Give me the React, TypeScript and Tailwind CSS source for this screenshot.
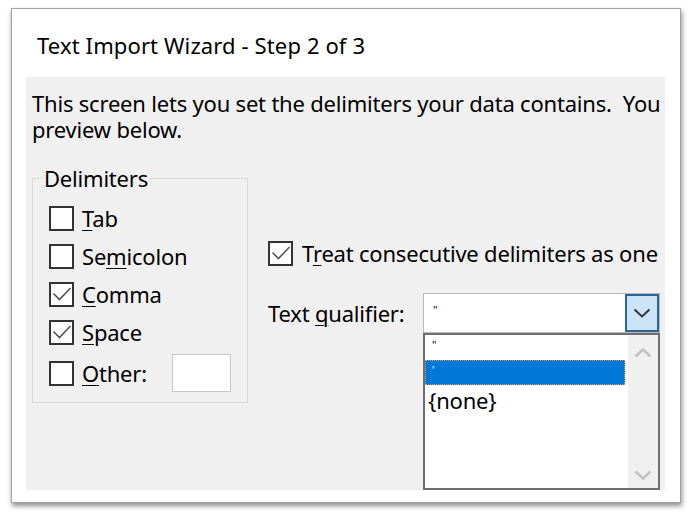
import React from 'react';

function CheckBox({ checked }: { checked?: boolean }) {
  return (
    <span className="flex h-[25px] w-[25px] shrink-0 items-center justify-center border-2 border-[#333333] bg-white">
      {checked && (
        <svg viewBox="0 0 21 21" className="h-[21px] w-[21px]">
          <path d="M2.5 9.5 L8.5 15.5 L19.5 4" fill="none" stroke="#555555" strokeWidth="1.6" />
        </svg>
      )}
    </span>
  );
}

function Chevron({ up, color, width }: { up?: boolean; color: string; width: number }) {
  return (
    <svg viewBox="0 0 18 10" className="h-[10px] w-[18px]">
      <path
        d={up ? 'M1.5 8.5 L9 1.5 L16.5 8.5' : 'M1.5 1.5 L9 8.5 L16.5 1.5'}
        fill="none"
        stroke={color}
        strokeWidth={width}
      />
    </svg>
  );
}

function Option({ checked, label }: { checked?: boolean; label: React.ReactNode }) {
  return (
    <div className="flex h-[38px] items-center gap-[8px]">
      <CheckBox checked={checked} />
      <span className="whitespace-nowrap">{label}</span>
    </div>
  );
}

const u = 'underline decoration-1 underline-offset-[3px]';

export default function App() {
  return (
    <div className="h-[519px] w-[691px] overflow-hidden bg-white pl-[11px] pt-[8px] font-['Noto_Sans',sans-serif] text-[22px] text-black">
      <div className="h-[495px] w-[670px] border border-[#a3a3a3] bg-white shadow-[1px_3px_5px_rgba(0,0,0,0.45)]">
        <div className="pl-[25px] pt-[23px] leading-[26px] tracking-[0.12px]">Text Import Wizard - Step 2 of 3</div>

        <div className="ml-[14px] mt-[19px] h-[413px] w-[639px] overflow-hidden bg-[#f0f0f0] pl-[6px] pt-[13px] tracking-[-0.2px]">
          <div className="whitespace-pre leading-[26px]">
            {'This screen lets you set the delimiters your data contains.  You can see how your text is affected in the'}
          </div>
          <div className="whitespace-pre leading-[26px]">preview below.</div>

          <div className="mt-[24px] flex items-start">
            <fieldset className="w-[216px] border border-[#d9d9d9] p-0">
              <legend className="ml-[9px] px-[2px] leading-[24px]">Delimiters</legend>
              <div className="pb-[7px] pl-[16px] pt-[9px]">
                <Option label={<><span className={u}>T</span>ab</>} />
                <Option label={<>Se<span className={u}>m</span>icolon</>} />
                <Option checked label={<><span className={u}>C</span>omma</>} />
                <Option checked label={<><span className={u}>S</span>pace</>} />
                <div className="flex h-[44px] items-center gap-[8px]">
                  <CheckBox />
                  <span className="w-[82px] whitespace-nowrap">
                    <span className={u}>O</span>ther:
                  </span>
                  <span className="h-[38px] w-[59px] border border-[#c8c8c8] bg-white" />
                </div>
              </div>
            </fieldset>

            <div className="ml-[20px] pt-[68px]">
              <div className="flex h-[38px] items-center gap-[9px]">
                <CheckBox checked />
                <span className="whitespace-nowrap">
                  T<span className={u}>r</span>eat consecutive delimiters as one
                </span>
              </div>

              <div className="mt-[21px] flex h-[40px] items-center">
                <span className="w-[155px] whitespace-nowrap">
                  Text <span className={u}>q</span>ualifier:
                </span>
                <div className="relative flex h-[40px] w-[237px] border border-[#bababa] bg-white">
                  <span className="flex-1 pl-[9px] pt-[10px] text-[11px] leading-none">"</span>
                  <span className="flex w-[34px] items-center justify-center border-2 border-[#2b6595] bg-[#cce4f7]">
                    <Chevron color="#333333" width={2} />
                  </span>

                  <div className="absolute left-[-1px] top-[39px] flex h-[157px] w-[237px] border-2 border-[#6f6f6f] bg-white">
                    <div className="flex-1 pr-[3px]">
                      <div className="h-[25px] pl-[7px] pt-[4px] text-[11px] leading-none">"</div>
                      <div className="h-[25px] border border-dotted border-[#d39a55] bg-[#0078d7] pl-[6px] pt-[3px] text-[11px] leading-none text-white">
                        '
                      </div>
                      <div className="h-[25px] pl-[3px] pt-[3px] leading-[25px]">{'{none}'}</div>
                    </div>
                    <div className="flex w-[30px] flex-col items-center justify-between bg-[#f0f0f0] pb-[8px] pt-[13px]">
                      <Chevron up color="#c2c2c2" width={2.6} />
                      <Chevron color="#c2c2c2" width={2.6} />
                    </div>
                  </div>
                </div>
              </div>
            </div>
          </div>
        </div>
      </div>
    </div>
  );
}
